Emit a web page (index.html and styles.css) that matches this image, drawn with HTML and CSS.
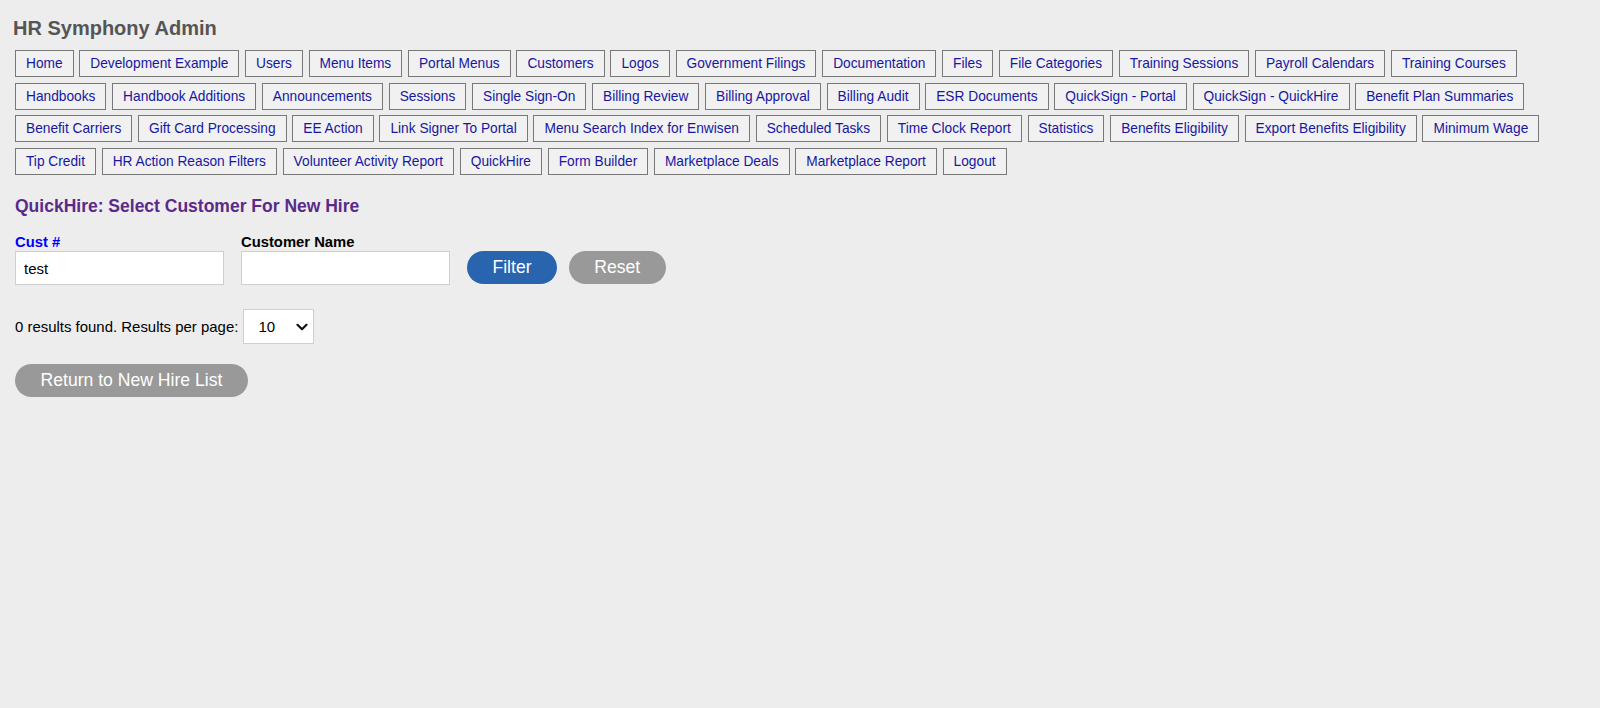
FILE: index.html
```html
<!DOCTYPE html>
<html lang="en">
<head>
<meta charset="utf-8">
<title>HR Symphony Admin</title>
<link rel="stylesheet" href="styles.css">
</head>
<body>
<div class="page">
  <h1 class="site-title">HR Symphony Admin</h1>
  <nav class="admin-nav">
    <a class="nav-btn" href="#">Home</a>
    <a class="nav-btn" href="#">Development Example</a>
    <a class="nav-btn" href="#">Users</a>
    <a class="nav-btn" href="#">Menu Items</a>
    <a class="nav-btn" href="#">Portal Menus</a>
    <a class="nav-btn" href="#">Customers</a>
    <a class="nav-btn" href="#">Logos</a>
    <a class="nav-btn" href="#">Government Filings</a>
    <a class="nav-btn" href="#">Documentation</a>
    <a class="nav-btn" href="#">Files</a>
    <a class="nav-btn" href="#">File Categories</a>
    <a class="nav-btn" href="#">Training Sessions</a>
    <a class="nav-btn" href="#">Payroll Calendars</a>
    <a class="nav-btn" href="#">Training Courses</a>
    <a class="nav-btn" href="#">Handbooks</a>
    <a class="nav-btn" href="#">Handbook Additions</a>
    <a class="nav-btn" href="#">Announcements</a>
    <a class="nav-btn" href="#">Sessions</a>
    <a class="nav-btn" href="#">Single Sign-On</a>
    <a class="nav-btn" href="#">Billing Review</a>
    <a class="nav-btn" href="#">Billing Approval</a>
    <a class="nav-btn" href="#">Billing Audit</a>
    <a class="nav-btn" href="#">ESR Documents</a>
    <a class="nav-btn" href="#">QuickSign - Portal</a>
    <a class="nav-btn" href="#">QuickSign - QuickHire</a>
    <a class="nav-btn" href="#">Benefit Plan Summaries</a>
    <a class="nav-btn" href="#">Benefit Carriers</a>
    <a class="nav-btn" href="#">Gift Card Processing</a>
    <a class="nav-btn" href="#">EE Action</a>
    <a class="nav-btn" href="#">Link Signer To Portal</a>
    <a class="nav-btn" href="#">Menu Search Index for Enwisen</a>
    <a class="nav-btn" href="#">Scheduled Tasks</a>
    <a class="nav-btn" href="#">Time Clock Report</a>
    <a class="nav-btn" href="#">Statistics</a>
    <a class="nav-btn" href="#">Benefits Eligibility</a>
    <a class="nav-btn" href="#">Export Benefits Eligibility</a>
    <a class="nav-btn" href="#">Minimum Wage</a>
    <a class="nav-btn" href="#">Tip Credit</a>
    <a class="nav-btn" href="#">HR Action Reason Filters</a>
    <a class="nav-btn" href="#">Volunteer Activity Report</a>
    <a class="nav-btn" href="#">QuickHire</a>
    <a class="nav-btn" href="#">Form Builder</a>
    <a class="nav-btn" href="#">Marketplace Deals</a>
    <a class="nav-btn" href="#">Marketplace Report</a>
    <a class="nav-btn" href="#">Logout</a>
  </nav>

  <h2 class="section-title">QuickHire: Select Customer For New Hire</h2>

  <form class="filter-row" onsubmit="return false;">
    <div class="field">
      <label class="field-label field-label--active" for="custNo">Cust #</label>
      <input class="text-input" id="custNo" type="text" value="test">
    </div>
    <div class="field">
      <label class="field-label" for="custName">Customer Name</label>
      <input class="text-input" id="custName" type="text" value="">
    </div>
    <div class="filter-actions">
      <button class="pill-btn pill-btn--primary" type="button">Filter</button>
      <button class="pill-btn pill-btn--muted" type="button">Reset</button>
    </div>
  </form>

  <div class="results-row">
    <span class="results-text">0 results found. Results per page:</span>
    <div class="select-wrap">
      <select class="per-page">
        <option selected>10</option>
        <option>25</option>
        <option>50</option>
        <option>100</option>
      </select>
      <svg class="select-chevron" width="12" height="8" viewBox="0 0 12 8" aria-hidden="true">
        <path d="M1.5 1.8 L6 6.2 L10.5 1.8" fill="none" stroke="#111" stroke-width="2.2" stroke-linecap="round" stroke-linejoin="round"/>
      </svg>
    </div>
  </div>

  <div class="return-row">
    <button class="pill-btn pill-btn--muted" type="button">Return to New Hire List</button>
  </div>
</div>
</body>
</html>
```

FILE: styles.css
```css
html, body {
  margin: 0;
  padding: 0;
  background: #ededed;
}

body {
  font-family: "Liberation Sans", Arial, sans-serif;
  color: #000;
}

.page {
  padding: 16px 8px 0 15px;
}

.site-title {
  margin: 0 0 0 -2px;
  font-size: 20px;
  line-height: 24px;
  font-weight: bold;
  color: #555555;
}

.admin-nav {
  display: flex;
  flex-wrap: wrap;
  column-gap: 5.7px;
  row-gap: 5.67px;
  margin-top: 10px;
}

.nav-btn {
  display: block;
  box-sizing: border-box;
  height: 27px;
  padding: 0 10px;
  line-height: 25px;
  font-size: 13.73px;
  color: #1717a0;
  text-decoration: none;
  background: #f1f1f1;
  border: 1px solid #787878;
  white-space: nowrap;
}

.section-title {
  margin: 22px 0 0 0;
  font-size: 17.5px;
  line-height: 18px;
  font-weight: bold;
  color: #5a2a8a;
}

.filter-row {
  display: flex;
  align-items: flex-end;
  margin: 19px 0 0 0;
}

.field {
  display: flex;
  flex-direction: column;
  margin-right: 16.6px;
}

.field-label {
  font-size: 14.8px;
  line-height: 16px;
  font-weight: bold;
  color: #000;
  margin-bottom: 1px;
}

.field-label--active {
  color: #0000ff;
}

.text-input {
  box-sizing: border-box;
  width: 209.4px;
  height: 34.3px;
  margin: 0;
  padding: 0 8px;
  font-family: "Liberation Sans", Arial, sans-serif;
  font-size: 15px;
  color: #000;
  background: #fff;
  border: 1px solid #cfcfcf;
  border-radius: 0;
  outline: none;
}

.filter-actions {
  display: flex;
  gap: 11.7px;
  margin-bottom: 1.3px;
}

.pill-btn {
  box-sizing: border-box;
  height: 33px;
  margin: 0;
  padding: 0 25.5px;
  border: 0;
  border-radius: 17px;
  font-family: "Liberation Sans", Arial, sans-serif;
  font-size: 17.6px;
  line-height: 33px;
  color: #fff;
  cursor: pointer;
}

.pill-btn--primary {
  background: #2964ae;
}

.pill-btn--muted {
  background: #999999;
}

.results-row {
  display: flex;
  align-items: center;
  gap: 5px;
  margin-top: 24px;
}

.results-text {
  font-size: 14.95px;
  line-height: 17px;
  color: #000;
}

.select-wrap {
  position: relative;
  display: block;
}

.per-page {
  display: block;
  box-sizing: border-box;
  width: 70.3px;
  height: 35px;
  margin: 0;
  padding: 0 0 0 14px;
  font-family: "Liberation Sans", Arial, sans-serif;
  font-size: 15px;
  color: #000;
  background: #fff;
  border: 1px solid #d0d0d0;
  border-radius: 0;
  -webkit-appearance: none;
  appearance: none;
  outline: none;
}

.select-chevron {
  position: absolute;
  top: 14px;
  left: 52.5px;
  pointer-events: none;
}

.return-row {
  margin-top: 19.7px;
}
```
